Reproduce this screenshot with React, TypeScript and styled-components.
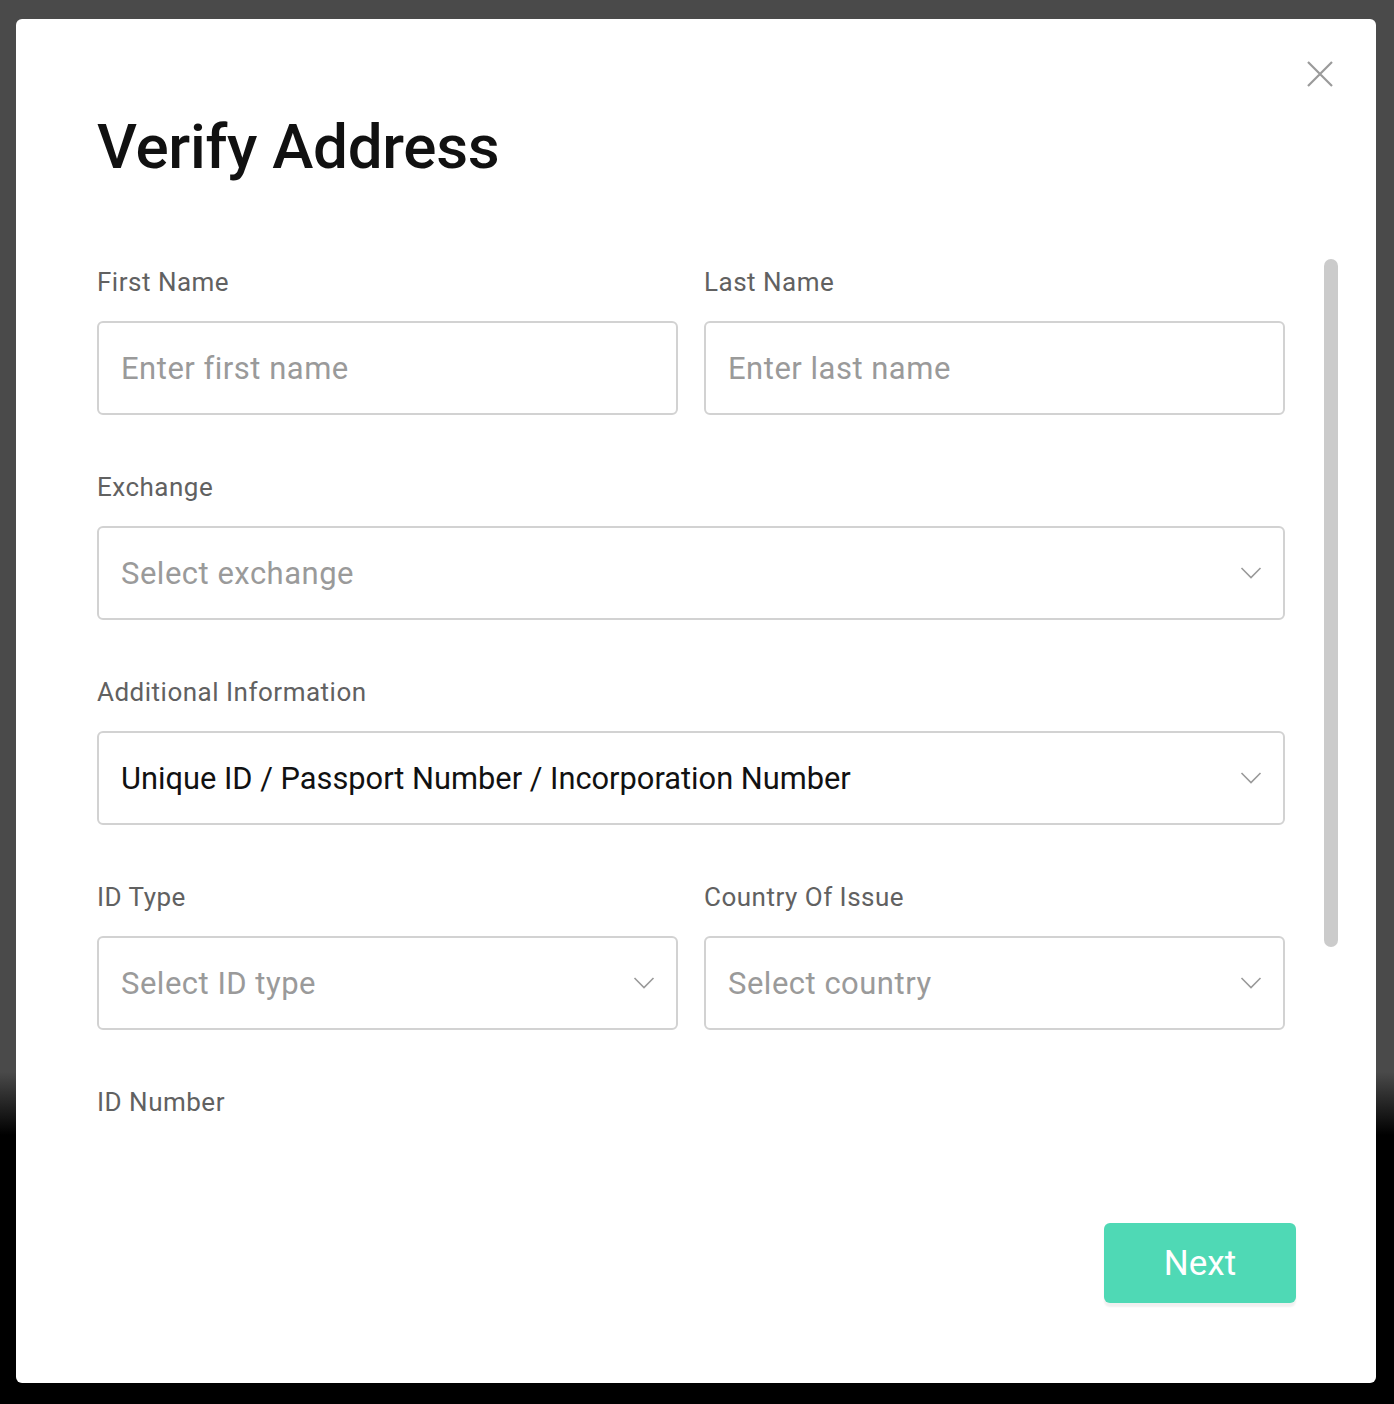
import React from 'react';
import styled, { createGlobalStyle } from 'styled-components';

const GlobalStyle = createGlobalStyle`
  html, body {
    margin: 0;
    padding: 0;
  }

  body {
    background: linear-gradient(to bottom, #4a4a4a 0, #4a4a4a 1072px, #000 1135px, #000 100%);
    font-family: Roboto, 'Noto Sans', 'Liberation Sans', sans-serif;
    min-height: 1404px;
  }
`;

const StyledBackdrop = styled.div`
  box-sizing: border-box;
  height: 1404px;
  padding: 19px 18px 21px 16px;
  width: 1394px;
`;

const StyledModal = styled.div`
  background: #fff;
  border-radius: 6px;
  display: flex;
  flex-direction: column;
  height: 100%;
  position: relative;
`;

const StyledClose = styled.button`
  background: none;
  border: 0;
  cursor: pointer;
  height: 26px;
  padding: 0;
  position: absolute;
  right: 43px;
  top: 42px;
  width: 26px;

  & svg {
    display: block;
  }
`;

const StyledHeader = styled.div`
  padding: 90px 81px 0;
`;

const StyledTitle = styled.h1`
  color: #111;
  font-size: 62px;
  font-weight: 500;
  letter-spacing: -0.3px;
  line-height: 76px;
  margin: 0;
`;

const StyledScrollArea = styled.div`
  height: 876px;
  margin-top: 74px;
  overflow: hidden;
  position: relative;
`;

const StyledScrollThumb = styled.div`
  background: #cbcbcb;
  border-radius: 7px;
  height: 688px;
  position: absolute;
  right: 38px;
  top: 0;
  width: 14px;
`;

const StyledForm = styled.form`
  display: flex;
  flex-direction: column;
  gap: 57px;
  padding: 8px 91px 0 81px;
`;

const StyledRow = styled.div<{ $columns: number }>`
  display: grid;
  gap: 26px;
  grid-template-columns: repeat(${({ $columns }) => $columns}, 1fr);
`;

const StyledField = styled.div`
  display: flex;
  flex-direction: column;
  gap: 24px;
`;

const StyledLabel = styled.label`
  color: #616161;
  font-size: 26px;
  letter-spacing: 0.5px;
  line-height: 30px;
`;

const StyledBox = styled.div<{ $filled?: boolean }>`
  align-items: center;
  border: 2px solid #d2d2d2;
  border-radius: 6px;
  box-sizing: border-box;
  color: ${({ $filled }) => ($filled ? '#111' : '#9a9a9a')};
  display: flex;
  font-size: ${({ $filled }) => ($filled ? '30.8px' : '31px')};
  height: 94px;
  justify-content: space-between;
  letter-spacing: ${({ $filled }) => ($filled ? '0' : '0.5px')};
  padding: 0 21px 0 22px;

  & svg {
    flex-shrink: 0;
  }
`;

const StyledFooter = styled.div`
  display: flex;
  justify-content: flex-end;
  padding: 88px 80px 80px;
`;

const StyledButton = styled.button`
  background: #4fd9b5;
  border: 0;
  border-radius: 6px;
  box-shadow: 0 4px 2px rgba(0, 0, 0, 0.06);
  color: #fff;
  cursor: pointer;
  font-family: inherit;
  font-size: 35px;
  height: 80px;
  width: 192px;
`;

const Chevron = () => (
  <svg width="22" height="14" viewBox="0 0 22 14" fill="none">
    <path d="M1.5 2 L11 11.5 L20.5 2" stroke="#9a9a9a" strokeWidth="1.6" />
  </svg>
);

interface FieldProps {
  label: string;
  value?: string;
  filled?: boolean;
  select?: boolean;
}

const Field = ({ label, value, filled, select }: FieldProps) => (
  <StyledField>
    <StyledLabel>{label}</StyledLabel>
    <StyledBox $filled={filled}>
      <span>{value}</span>
      {select && <Chevron />}
    </StyledBox>
  </StyledField>
);

export default function App() {
  return (
    <>
      <GlobalStyle />
      <StyledBackdrop>
        <StyledModal>
          <StyledClose aria-label="Close">
            <svg width="26" height="26" viewBox="0 0 26 26">
              <path d="M1 1 L25 25 M25 1 L1 25" stroke="#9a9a9a" strokeWidth="2.2" />
            </svg>
          </StyledClose>

          <StyledHeader>
            <StyledTitle>Verify Address</StyledTitle>
          </StyledHeader>

          <StyledScrollArea>
            <StyledForm>
              <StyledRow $columns={2}>
                <Field label="First Name" value="Enter first name" />
                <Field label="Last Name" value="Enter last name" />
              </StyledRow>
              <StyledRow $columns={1}>
                <Field label="Exchange" value="Select exchange" select />
              </StyledRow>
              <StyledRow $columns={1}>
                <Field
                  label="Additional Information"
                  value="Unique ID / Passport Number / Incorporation Number"
                  filled
                  select
                />
              </StyledRow>
              <StyledRow $columns={2}>
                <Field label="ID Type" value="Select ID type" select />
                <Field label="Country Of Issue" value="Select country" select />
              </StyledRow>
              <StyledRow $columns={1}>
                <Field label="ID Number" />
              </StyledRow>
            </StyledForm>
            <StyledScrollThumb />
          </StyledScrollArea>

          <StyledFooter>
            <StyledButton type="button">Next</StyledButton>
          </StyledFooter>
        </StyledModal>
      </StyledBackdrop>
    </>
  );
}
